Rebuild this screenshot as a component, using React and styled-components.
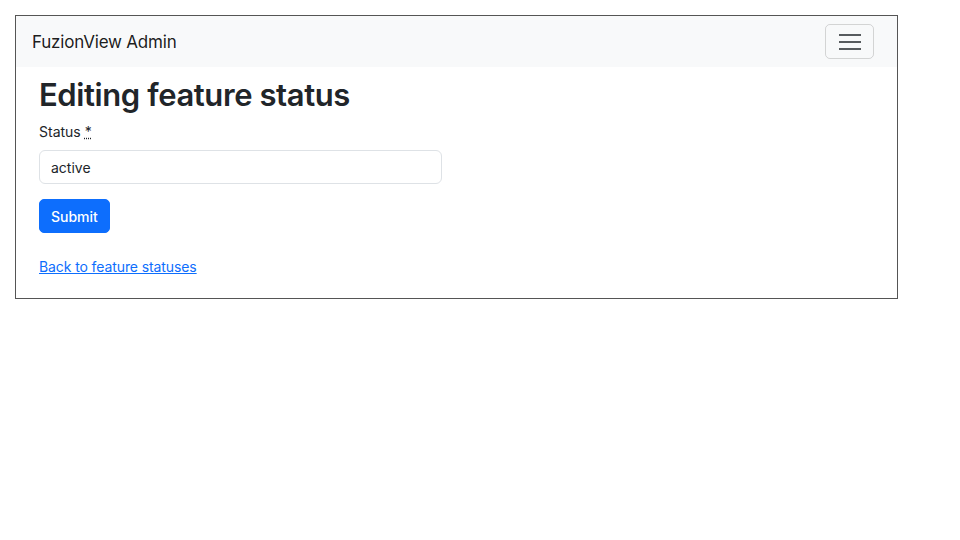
import styled, { createGlobalStyle } from "styled-components";

const GlobalStyle = createGlobalStyle`
  body {
    margin: 0;
    font-family: Inter, "Noto Sans", "Liberation Sans", sans-serif;
    color: #212529;
    background: #fff;
  }
`;

const Frame = styled.div`
  box-sizing: border-box;
  margin: 15px 0 0 15px;
  width: 883px;
  height: 284px;
  border: 1px solid #555;
`;

const Navbar = styled.nav`
  display: flex;
  align-items: center;
  justify-content: space-between;
  height: 51px;
  padding: 0 23px 0 16px;
  background: #f8f9fa;
`;

const Brand = styled.a`
  font-size: 17px;
  color: rgba(0, 0, 0, 0.9);
  text-decoration: none;
  letter-spacing: -0.2px;
`;

const Toggler = styled.button`
  box-sizing: border-box;
  width: 49px;
  height: 35px;
  display: flex;
  flex-direction: column;
  align-items: center;
  justify-content: center;
  gap: 5px;
  background: transparent;
  border: 1px solid rgba(0, 0, 0, 0.15);
  border-radius: 5px;
  padding: 0;
`;

const Bar = styled.span`
  display: block;
  width: 22px;
  height: 2px;
  background: rgba(33, 37, 41, 0.75);
`;

const Main = styled.main`
  padding: 0 23px;
`;

const Title = styled.h1`
  margin: 9px 0 10px;
  font-size: 31px;
  font-weight: 600;
  line-height: 1.2;
  letter-spacing: -0.4px;
`;

const Field = styled.div`
  margin-bottom: 15px;
`;

const Label = styled.label`
  display: block;
  font-size: 14px;
  margin-bottom: 10px;
  abbr {
    text-decoration: underline dotted;
    cursor: help;
  }
`;

const Input = styled.input`
  box-sizing: border-box;
  display: block;
  width: 403px;
  height: 34px;
  padding: 0 11px;
  font-family: inherit;
  font-size: 14px;
  color: #212529;
  border: 1px solid #dee2e6;
  border-radius: 6px;
  outline: none;
`;

const Button = styled.button`
  box-sizing: border-box;
  height: 34px;
  padding: 0 11px;
  font-family: inherit;
  font-size: 14px;
  font-weight: 500;
  color: #fff;
  background: #0d6efd;
  border: 1px solid #0d6efd;
  border-radius: 5px;
`;

const BackLink = styled.a`
  display: inline-block;
  margin-top: 25px;
  font-size: 14px;
  letter-spacing: -0.1px;
  color: #0d6efd;
  text-decoration: underline;
`;

export default function App() {
  return (
    <>
      <GlobalStyle />
      <Frame>
        <Navbar>
          <Brand href="#">FuzionView Admin</Brand>
          <Toggler aria-label="Toggle navigation">
            <Bar />
            <Bar />
            <Bar />
          </Toggler>
        </Navbar>
        <Main>
          <Title>Editing feature status</Title>
          <form>
            <Field>
              <Label htmlFor="status">
                Status <abbr title="required">*</abbr>
              </Label>
              <Input id="status" defaultValue="active" />
            </Field>
            <Button type="submit">Submit</Button>
          </form>
          <BackLink href="#">Back to feature statuses</BackLink>
        </Main>
      </Frame>
    </>
  );
}
